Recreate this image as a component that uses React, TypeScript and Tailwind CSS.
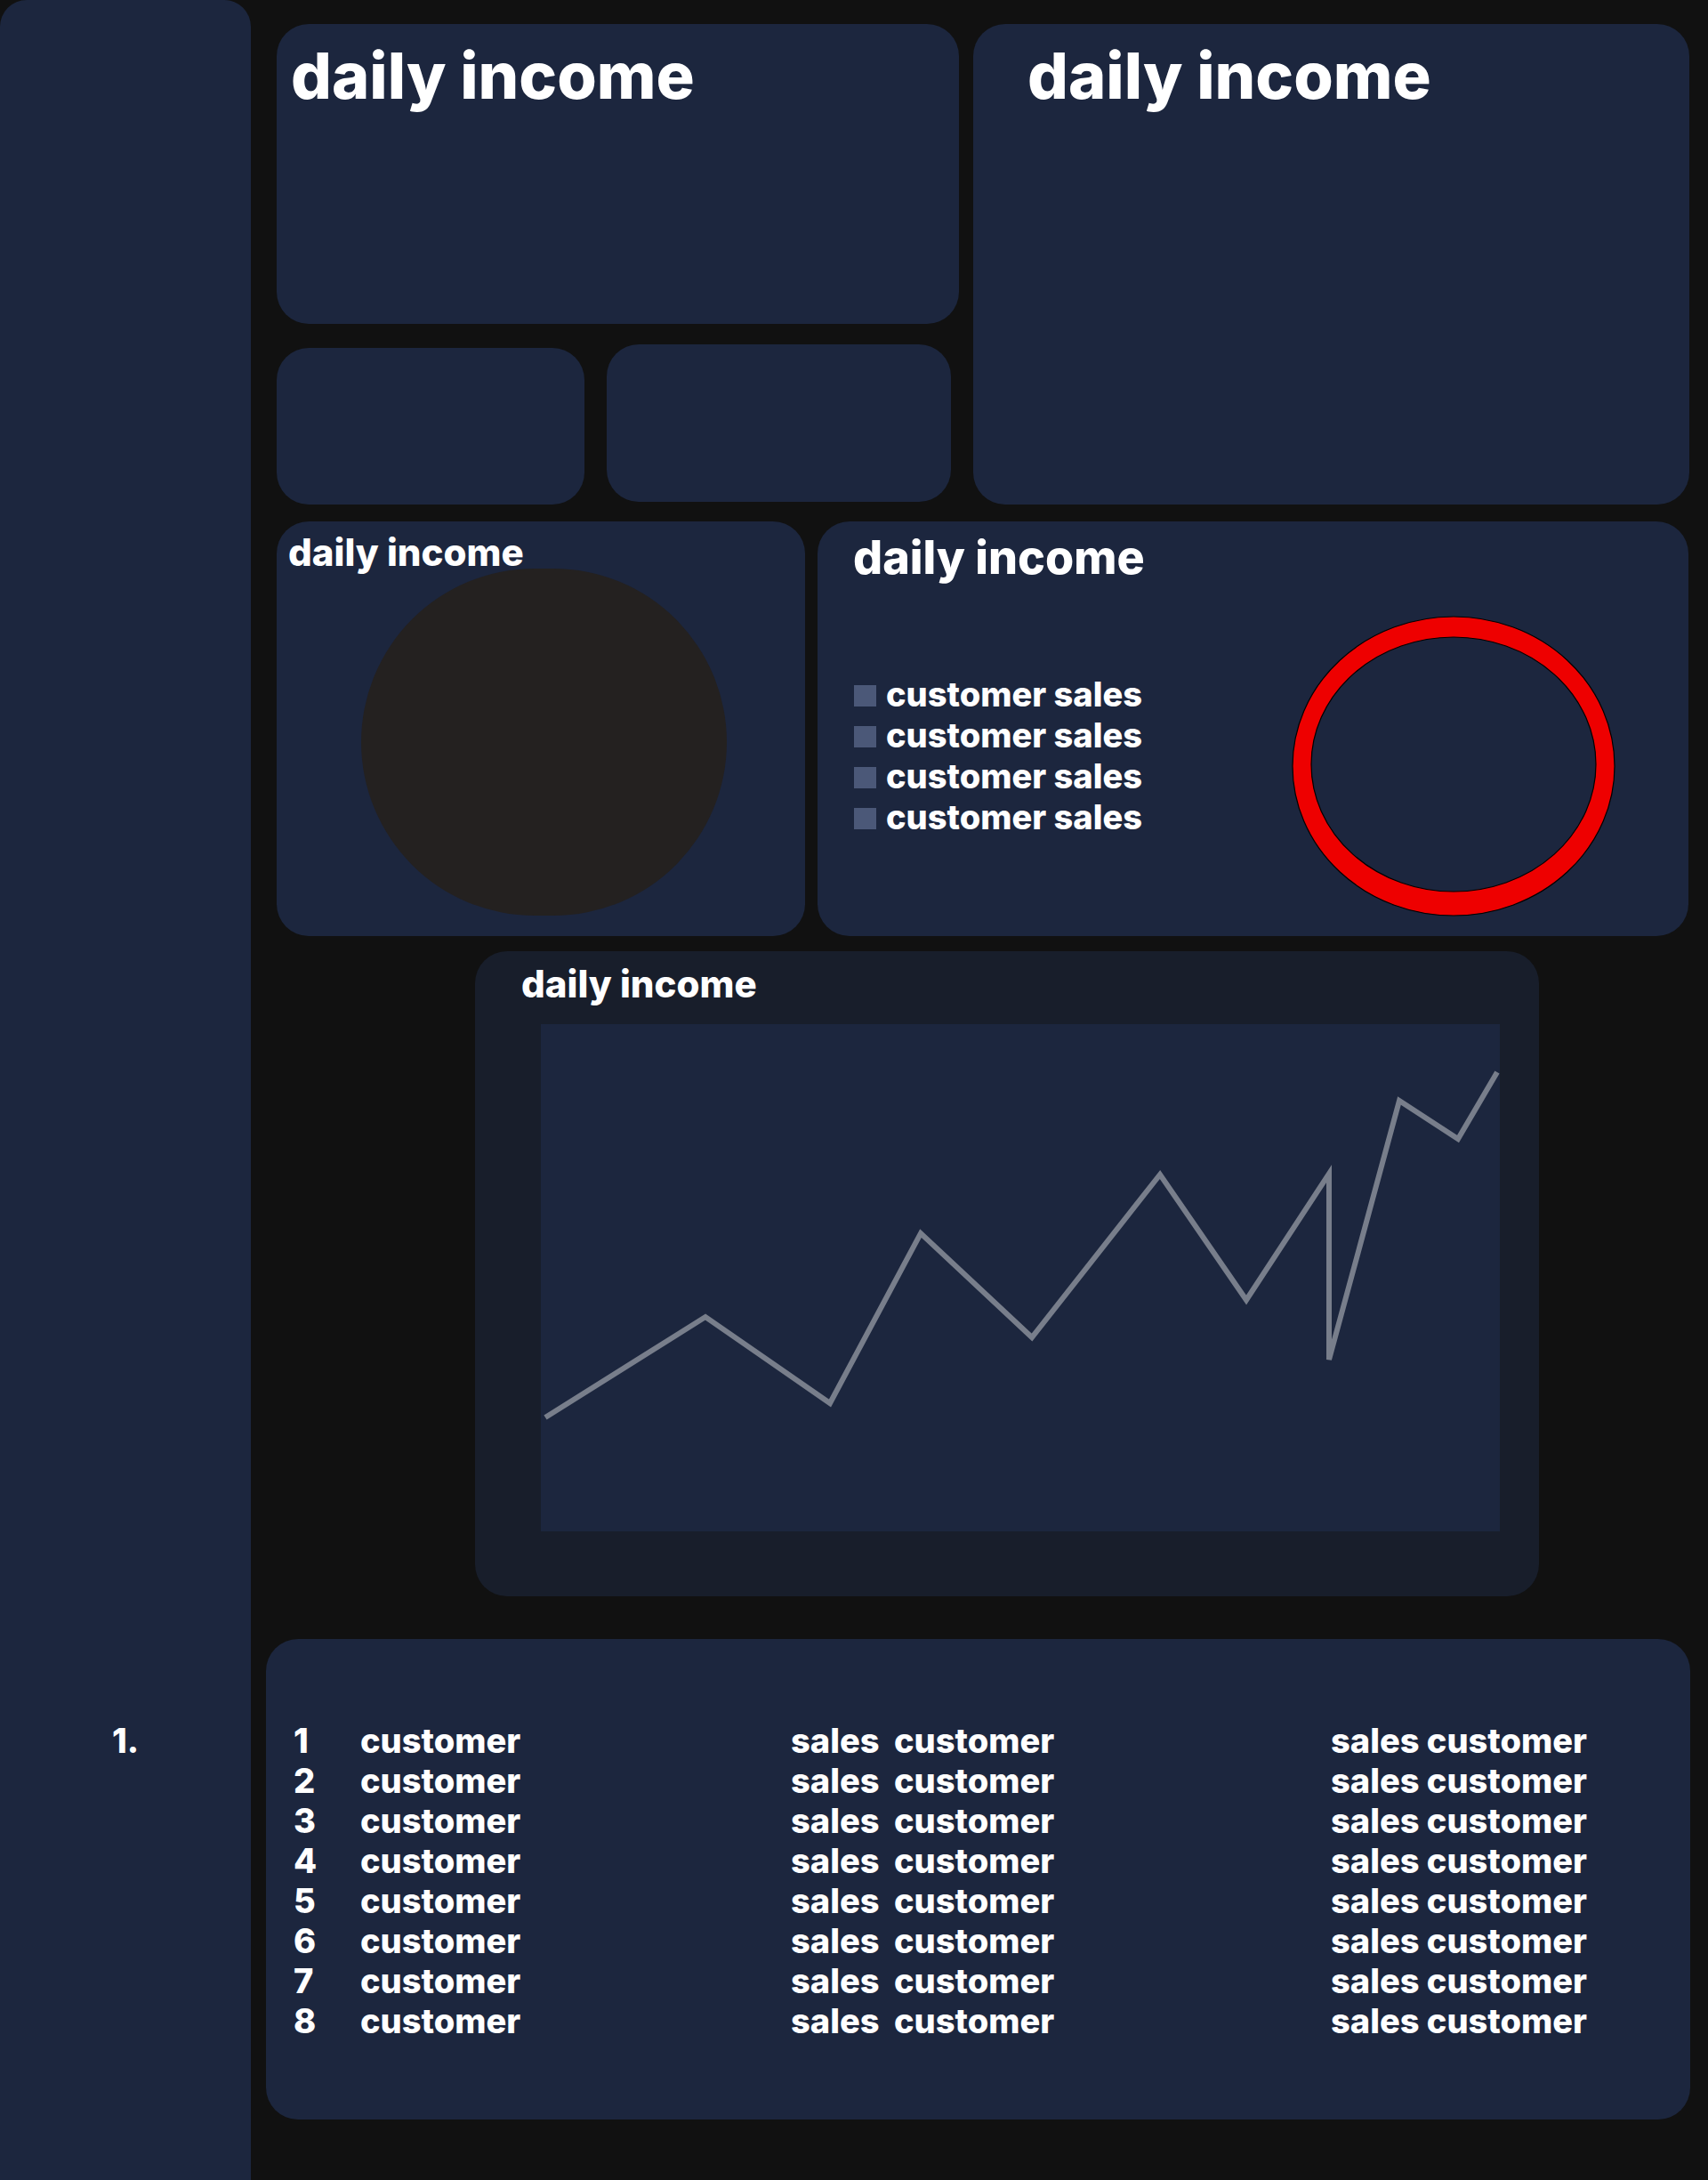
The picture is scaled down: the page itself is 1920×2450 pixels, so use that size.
const card = 'bg-[#1c263e] rounded-[36px]'

const points = [
  [5, 442], [185, 329], [325, 426], [427, 235], [552, 352], [696, 169],
  [793, 310], [886, 168], [886, 377], [965, 86], [1031, 129], [1075, 54],
]

const legend = ['customer sales', 'customer sales', 'customer sales', 'customer sales']
const rows = [1, 2, 3, 4, 5, 6, 7, 8]

export default function App() {
  return (
    <div className="min-h-[2450px] bg-[#111111] flex font-['Inter',sans-serif] font-extrabold text-white">
      {/* Sidebar */}
      <aside className="w-[282px] h-[2450px] shrink-0 bg-[#1c263e] rounded-t-[30px] pt-[1934px] text-center text-[38px] leading-[45px]">
        1.
      </aside>

      <main className="flex-1 pl-[29px] pt-[27px]">
        {/* Top row */}
        <div className="flex">
          <div className="w-[767px]">
            <div className={`${card} h-[337px] pl-[16px] pt-[22px]`}>
              <h1 className="text-[72px] leading-none">daily income</h1>
            </div>
            <div className="flex items-start">
              <div className={`${card} w-[346px] h-[176px] mt-[27px]`} />
              <div className={`${card} w-[387px] h-[177px] mt-[23px] ml-[25px]`} />
            </div>
          </div>
          <div className={`${card} w-[805px] h-[540px] ml-[16px] pl-[61px] pt-[22px]`}>
            <h1 className="text-[72px] leading-none">daily income</h1>
          </div>
        </div>

        {/* Pie + legend */}
        <div className="flex mt-[19px]">
          <div className={`${card} w-[594px] h-[466px] pt-[14px] pl-[13px]`}>
            <h2 className="text-[42px] leading-none">daily income</h2>
            <div className="ml-[82px] -mt-[3px] w-[411px] h-[390px] rounded-full bg-[#242120]" />
          </div>

          <div className={`${card} w-[979px] h-[466px] ml-[14px] pt-[15px] pl-[40px]`}>
            <h2 className="text-[52px] leading-none">daily income</h2>
            <div className="flex items-start">
              <ul className="mt-[104px] text-[38px] leading-[46px]">
                {legend.map((l, i) => (
                  <li key={i} className="flex items-baseline">
                    <span className="w-[25px] h-[24px] ml-[1px] mr-[11px] bg-[#4b5878]" />
                    {l}
                  </li>
                ))}
              </ul>
              <svg className="ml-auto mr-[82px] mt-[39px]" width="364" height="338" viewBox="0 0 364 338">
                <ellipse cx="182" cy="169" rx="181" ry="168" fill="#ee0000" stroke="#000" strokeWidth="1.2" />
                <ellipse cx="182" cy="167" rx="160" ry="143" fill="#1c263e" stroke="#000" strokeWidth="1.2" />
              </svg>
            </div>
          </div>
        </div>

        {/* Line chart */}
        <div className="ml-[223px] mt-[17px] w-[1196px] h-[725px] rounded-[36px] bg-[#181e2b] pt-[16px] pl-[52px]">
          <h2 className="text-[42px] leading-none">daily income</h2>
          <svg className="ml-[22px] mt-[24px] bg-[#1c263e]" width="1078" height="570" viewBox="0 0 1078 570">
            <polyline
              points={points.map(p => p.join(',')).join(' ')}
              fill="none"
              stroke="#787e8b"
              strokeWidth="6"
            />
          </svg>
        </div>

        {/* Table */}
        <div className={`${card} -ml-[12px] mt-[48px] w-[1601px] h-[540px] pt-[92px] pl-[31px] text-[38px] leading-[45px]`}>
          {rows.map(n => (
            <div key={n} className="flex">
              <span className="w-[75px]">{n}</span>
              <span className="w-[484px]">customer</span>
              <span className="w-[116px]">sales</span>
              <span className="w-[491px]">customer</span>
              <span>sales customer</span>
            </div>
          ))}
        </div>
      </main>
    </div>
  )
}
